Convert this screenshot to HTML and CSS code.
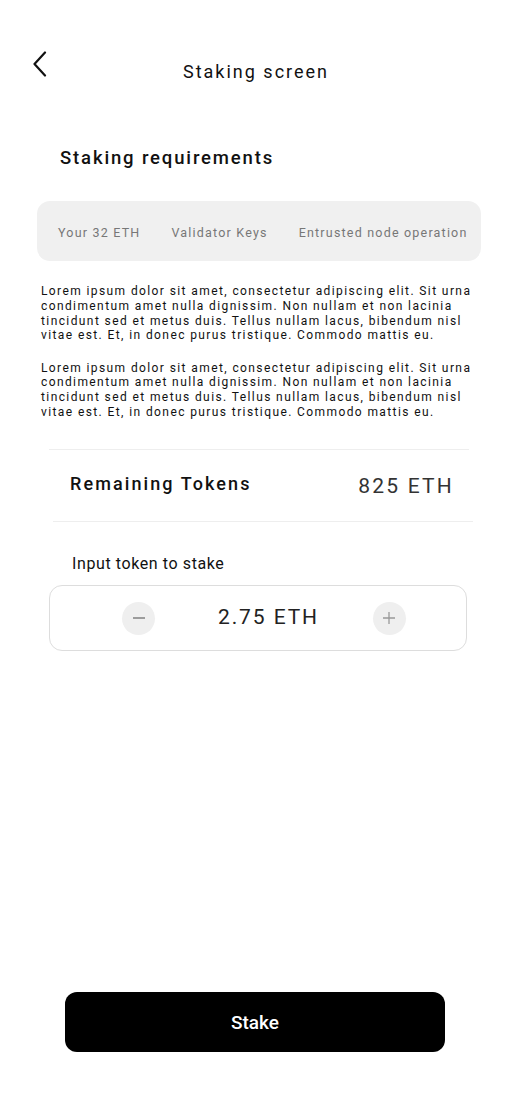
FILE: index.html
```html
<!DOCTYPE html>
<html>
<head>
<meta charset="utf-8">
<link rel="stylesheet" href="styles.css">
</head>
<body>
<div class="screen">
  <header class="header">
    <button class="back" aria-label="Back">
      <svg width="16" height="26" viewBox="0 0 16 26"><path d="M13 1.5 L2.5 13 L13 24.5" fill="none" stroke="#111" stroke-width="2.2" stroke-linecap="round" stroke-linejoin="round"/></svg>
    </button>
    <h1 class="title">Staking screen</h1>
    <span class="spacer"></span>
  </header>

  <h2 class="section-title">Staking requirements</h2>

  <div class="tabs">
    <span>Your 32 ETH</span>
    <span>Validator Keys</span>
    <span>Entrusted node operation</span>
  </div>

  <div class="copy">
    <p>Lorem ipsum dolor sit amet, consectetur adipiscing elit. Sit urna<br>condimentum amet nulla dignissim. Non nullam et non lacinia<br>tincidunt sed et metus duis. Tellus nullam lacus, bibendum nisl<br>vitae est. Et, in donec purus tristique. Commodo mattis eu.</p>
    <p>Lorem ipsum dolor sit amet, consectetur adipiscing elit. Sit urna<br>condimentum amet nulla dignissim. Non nullam et non lacinia<br>tincidunt sed et metus duis. Tellus nullam lacus, bibendum nisl<br>vitae est. Et, in donec purus tristique. Commodo mattis eu.</p>
  </div>

  <hr class="divider divider-top">
  <div class="remaining">
    <span class="rem-label">Remaining Tokens</span>
    <span class="rem-value">825 ETH</span>
  </div>
  <hr class="divider divider-bottom">

  <label class="input-label">Input token to stake</label>
  <div class="stepper">
    <button class="step" aria-label="Decrease">
      <svg width="14" height="14" viewBox="0 0 14 14"><path d="M1 7 H13" stroke="#888" stroke-width="1.6"/></svg>
    </button>
    <span class="amount">2.75 ETH</span>
    <button class="step" aria-label="Increase">
      <svg width="14" height="14" viewBox="0 0 14 14"><path d="M1 7 H13 M7 1 V13" stroke="#999" stroke-width="1.3"/></svg>
    </button>
  </div>

  <div class="grow"></div>

  <button class="stake">Stake</button>
</div>
</body>
</html>
```

FILE: styles.css
```css
* { box-sizing: border-box; }
html, body { margin: 0; padding: 0; background: #fff; }
body { font-family: Roboto, "Noto Sans", sans-serif; color: #111; }

.screen {
  width: 512px;
  height: 1108px;
  display: flex;
  flex-direction: column;
  padding: 0 0 56px;
}

.header {
  display: grid;
  grid-template-columns: 64px 1fr 64px;
  align-items: start;
  padding-top: 50px;
  height: 96px;
}
.back {
  border: 0; background: none; padding: 0;
  margin: 1px 0 0 32px;
  width: 18px; height: 26px;
  display: flex;
}
.title {
  margin: 0;
  padding-top: 10px;
  text-align: center;
  font-size: 18px;
  font-weight: 400;
  letter-spacing: 2px;
  line-height: 24px;
  color: #111;
}

.section-title {
  margin: 50px 0 0 60px;
  font-size: 18.5px;
  font-weight: 500;
  letter-spacing: 1.85px;
  line-height: 24px;
}

.tabs {
  margin: 31px 31px 0 37px;
  height: 60px;
  background: #f0f0f0;
  border-radius: 13px;
  display: flex;
  align-items: center;
  padding: 2px 0 0 21px;
  gap: 31px;
  font-size: 12.5px;
  letter-spacing: 1.2px;
  color: #777;
  white-space: nowrap;
}

.copy {
  margin: 23px 0 0 41px;
  font-size: 12px;
  line-height: 14.8px;
  letter-spacing: 1.4px;
  color: #111;
  white-space: nowrap;
}
.copy p { margin: 0 0 17.5px; }

.divider {
  border: 0;
  border-top: 1px solid #eee;
  height: 0;
  margin: 0;
}
.divider-top { margin: 12px 43px 0 49px; }
.divider-bottom { margin: 0 39px 0 53px; }

.remaining {
  margin: 0 39px 0 49px;
  height: 71px;
  display: flex;
  align-items: center;
  justify-content: space-between;
  padding: 0 19px 0 21px;
}
.rem-label {
  font-size: 18px;
  font-weight: 500;
  letter-spacing: 2.1px;
  margin-top: -5px;
}
.rem-value {
  font-size: 21px;
  letter-spacing: 2.2px;
  color: #333;
}

.input-label {
  margin: 32px 0 0 72px;
  font-size: 16px;
  line-height: 20px;
  letter-spacing: 0.6px;
  color: #111;
}

.stepper {
  margin: 11px 45px 0 49px;
  height: 66px;
  border: 1px solid #ddd;
  border-radius: 13px;
  display: flex;
  align-items: center;
  justify-content: space-between;
  padding: 0 60px 0 72px;
}
.step {
  width: 33px; height: 33px;
  border-radius: 50%;
  border: 0;
  background: #efefef;
  display: flex; align-items: center; justify-content: center;
  padding: 0;
}
.amount {
  font-size: 21px;
  letter-spacing: 1.9px;
  color: #222;
  margin: -3px 0 0 9px;
}

.grow { flex: 1; }

.stake {
  margin: 0 67px 0 65px;
  height: 60px;
  background: #000;
  color: #fff;
  border: 0;
  border-radius: 12px;
  font-family: Roboto, sans-serif;
  font-size: 19px;
  font-weight: 500;
}
```
